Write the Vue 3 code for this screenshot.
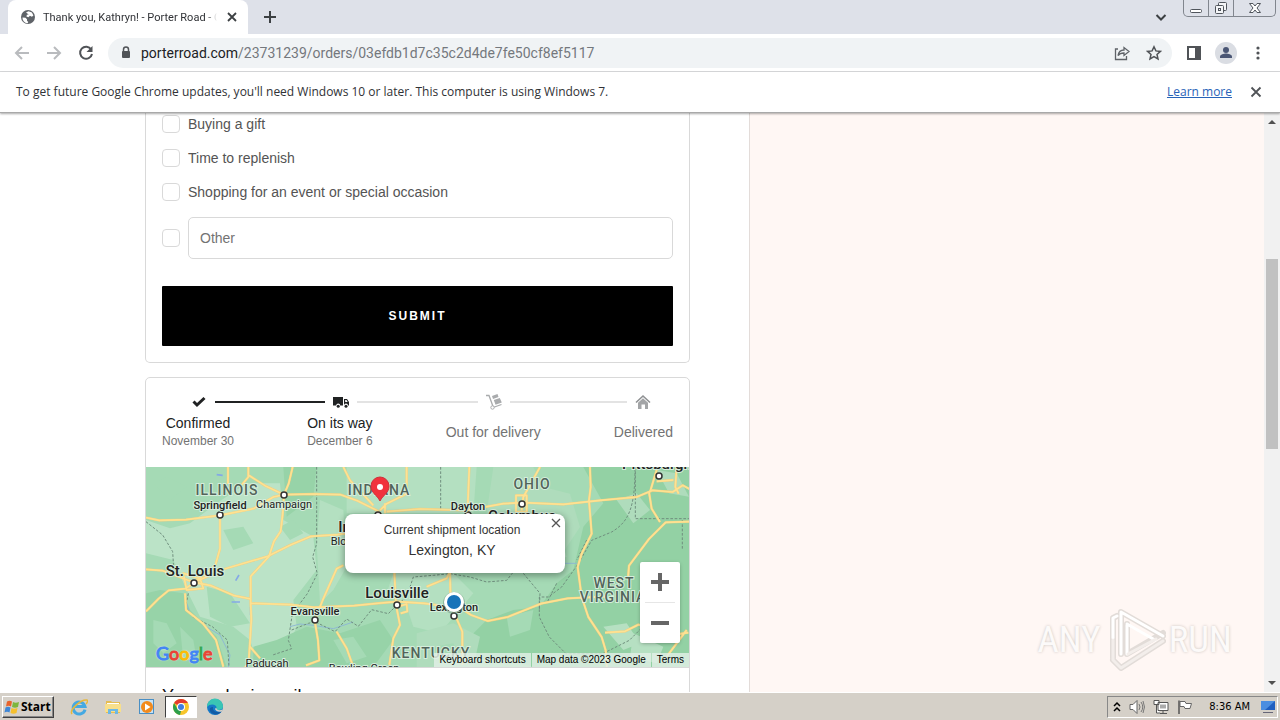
<template>
	<div class="desktop">
		<!-- tab strip -->
		<header class="tab-strip">
			<div class="tab">
				<svg class="globe" viewBox="0 0 16 16" width="16" height="16">
					<circle cx="8" cy="8" r="7" fill="#5f6368" />
					<path
						d="M2.5 8.5l3 .3 1.5 1.4v1.5l1.3 1.2-.8 1.3C4.6 14 2.4 11.500 2.500 8.500zM6 3.500l2.500-1.300 3.400 1.300 1.500 3-1.500 1.200-2-.9-1.500 1.400-2-.6.500-1.800 1.800-.3z"
						fill="#fff" />
				</svg>
				<span class="tab-title">Thank you, Kathryn! - Porter Road - Checkout</span>
				<button class="plain" aria-label="Close tab">
					<svg viewBox="0 0 16 16" width="16" height="16">
						<path d="M4 4l8 8M12 4l-8 8" stroke="#3c4043" stroke-width="1.800" />
					</svg>
				</button>
			</div>
			<button class="plain new-tab" aria-label="New tab">
				<svg viewBox="0 0 14 14" width="14" height="14">
					<path d="M7 1v12M1 7h12" stroke="#3c4043" stroke-width="2" />
				</svg>
			</button>
			<button class="plain tab-search" aria-label="Search tabs">
				<svg viewBox="0 0 12 12" width="12" height="12">
					<path d="M1.500 4L6 8.500 10.500 4" fill="none" stroke="#3c4043" stroke-width="2" />
				</svg>
			</button>
			<div class="window-buttons">
				<button aria-label="Minimize">
					<svg viewBox="0 0 14 14" width="14" height="14">
						<rect x="1.500" y="8.500" width="11" height="3" rx="1" fill="#fff" stroke="#50555c" />
					</svg>
				</button>
				<button aria-label="Restore">
					<svg viewBox="0 0 14 14" width="14" height="14">
						<g fill="#f4f5f7" stroke="#50555c">
							<rect x="4.500" y="1.500" width="8" height="8" rx="1" />
							<rect x="1.500" y="4.500" width="8" height="8" rx="1" />
							<rect x="4.500" y="7.500" width="2" height="2" />
						</g>
					</svg>
				</button>
				<button aria-label="Close">
					<svg viewBox="0 0 14 14" width="14" height="14">
						<path
							d="M1.500 2.500h3.500L7 5l2-2.500h3.500L9 7l3.500 4.500H9L7 9l-2 2.500H1.500L5 7z"
							fill="#fff"
							stroke="#50555c" />
					</svg>
				</button>
			</div>
		</header>

		<!-- toolbar -->
		<nav class="toolbar">
			<button class="plain" aria-label="Back">
				<svg viewBox="0 0 16 16" width="16" height="16">
					<path d="M15 8H2M8 2L2 8l6 6" fill="none" stroke="#b9bbbe" stroke-width="2" />
				</svg>
			</button>
			<button class="plain" aria-label="Forward">
				<svg viewBox="0 0 16 16" width="16" height="16">
					<path d="M1 8h13M8 2l6 6-6 6" fill="none" stroke="#b9bbbe" stroke-width="2" />
				</svg>
			</button>
			<button class="plain" aria-label="Reload">
				<svg viewBox="0 0 16 16" width="16" height="16">
					<path
						d="M13.200 4.500A6 6 0 1 0 14 9"
						fill="none"
						stroke="#505357"
						stroke-width="2" />
					<path d="M14.500 1v6h-6z" fill="#505357" />
				</svg>
			</button>
			<div class="address">
				<svg viewBox="0 0 12 16" width="12" height="16">
					<path d="M3.500 7V4.500a2.500 2.500 0 0 1 5 0V7" fill="none" stroke="#505357" stroke-width="1.500" />
					<rect x="2" y="6" width="8" height="7" rx="1" fill="#505357" />
				</svg>
				<span class="url"
					><b>porterroad.com</b>/23731239/orders/03efdb1d7c35c2d4de7fe50cf8ef5117</span
				>
				<button class="plain" aria-label="Share">
					<svg viewBox="0 0 16 16" width="16" height="16">
						<path
							d="M4 4H1.500v10.500h11V11M10 2.500V5C6.500 5 4.500 7.500 4 10.500 5.500 8.500 7.500 8 10 8v2.500l5-4z"
							fill="none"
							stroke="#5f6368"
							stroke-width="1.300" />
					</svg>
				</button>
				<button class="plain" aria-label="Bookmark">
					<svg viewBox="0 0 16 16" width="16" height="16">
						<path
							d="M8 1.800l1.900 4.100 4.500.5-3.400 3 1 4.500L8 11.600l-4 2.300 1-4.500-3.400-3 4.500-.5z"
							fill="none"
							stroke="#505357"
							stroke-width="1.500" />
					</svg>
				</button>
			</div>
			<button class="plain" aria-label="Side panel">
				<svg viewBox="0 0 16 16" width="16" height="16">
					<path d="M1 1h14v14H1zM3 3v10h6V3z" fill="#505357" fill-rule="evenodd" />
				</svg>
			</button>
			<button class="plain avatar" aria-label="Profile">
				<svg viewBox="0 0 22 22" width="22" height="22">
					<circle cx="11" cy="11" r="11" fill="#dadde3" />
					<circle cx="11" cy="8" r="3" fill="#4a5674" />
					<path d="M5 16v-1.500c0-2 4-3 6-3s6 1 6 3V16z" fill="#4a5674" />
				</svg>
			</button>
			<button class="plain" aria-label="Menu">
				<svg viewBox="0 0 16 16" width="16" height="16">
					<g fill="#505357">
						<circle cx="8" cy="3" r="1.600" />
						<circle cx="8" cy="8" r="1.600" />
						<circle cx="8" cy="13" r="1.600" />
					</g>
				</svg>
			</button>
		</nav>

		<div class="infobar">
			<span>{{ notice }}</span>
			<a href="#">Learn more</a>
			<button class="plain" aria-label="Dismiss">
				<svg viewBox="0 0 16 16" width="16" height="16">
					<path d="M3.500 3.500l9 9M12.500 3.500l-9 9" stroke="#505357" stroke-width="1.800" />
				</svg>
			</button>
		</div>

		<!-- page -->
		<div class="page">
			<main class="content">
				<form class="card survey" @submit.prevent>
					<label v-for="reason in reasons" :key="reason" class="option">
						<input type="checkbox" />
						<span>{{ reason }}</span>
					</label>
					<div class="option">
						<input type="checkbox" aria-label="Other" />
						<input v-model="other" class="field" type="text" placeholder="Other" aria-label="Other reason" />
					</div>
					<button class="submit">SUBMIT</button>
				</form>

				<section class="card">
					<div class="tracker">
						<div class="track-icons">
							<svg viewBox="0 0 16 16" width="16" height="16">
								<path d="M2.500 7.500L6 11l7.500-7" fill="none" stroke="#202223" stroke-width="3" />
							</svg>
							<i class="line first done"></i>
							<svg viewBox="0 0 16 16" width="16" height="16">
								<path
									d="M0 3h10v8.500H7.200a2 2 0 0 0-4 0H0zM11 5h3l2 3v3.500h-1a2 2 0 0 0-4 0zM12.200 6v2h2.500l-1.300-2z"
									fill="#202223"
									fill-rule="evenodd" />
								<circle cx="5.200" cy="12.200" r="1.500" fill="#202223" />
								<circle cx="13" cy="12.200" r="1.500" fill="#202223" />
							</svg>
							<i class="line second"></i>
							<svg viewBox="0 0 16 16" width="16" height="16">
								<path d="M0 1.500h3l4 11M7 13.500l8.500-3" fill="none" stroke="#a9abad" stroke-width="1.300" />
								<circle cx="6.500" cy="13.500" r="1.700" fill="#fff" stroke="#a9abad" />
								<path d="M6 2l5.500-2 1 3L7 5zM7.800 6l6-2 2 4.500-6.300 2.300z" fill="#a9abad" />
							</svg>
							<i class="line third"></i>
							<svg viewBox="0 0 16 16" width="16" height="16">
								<path d="M1 8.500L8 2l7 6.500" fill="none" stroke="#8f9193" stroke-width="1.600" />
								<path d="M3 8.800l5-4.600 5 4.600V15h-3v-4.500H6.500V15H3z" fill="#a3a5a7" />
							</svg>
						</div>
						<ol class="track-labels">
							<li v-for="step in steps" :key="step.name" :class="{ reached: step.date }">
								<span>{{ step.name }}</span>
								<small v-if="step.date">{{ step.date }}</small>
							</li>
						</ol>
					</div>

					<div class="map">
						<svg class="map-canvas" viewBox="0 0 543 200" preserveAspectRatio="xMidYMid slice">
							<rect width="543" height="200" fill="#a5dab5" />
							<g transform="translate(-6 -7) scale(.33333)">
								<!-- woodland and plains -->
								<path
									d="M18 180L90 205 150 190 230 130 320 70 420 70 430 180 520 230 530 330 460 420 470 500 440 570 350 600 330 540 280 500 180 470 140 390 100 300 18 280z"
									fill="#bbe3c7" />
								<path
									d="M540 120L610 150 620 320 580 390 540 430 530 250zM620 21L800 21 1010 21 1000 160 620 160zM760 340L940 340 1000 400 900 520 820 500 800 440 740 400z"
									fill="#b4e0c1" />
								<path
									d="M18 400L60 390 130 400 150 450 230 530 260 621 18 621zM340 560L410 540 500 500 600 520 720 480 760 540 700 621 340 621zM430 21L530 21 520 110 440 170z"
									fill="#97d3a8" />
								<path
									d="M1330 21L1647 21 1647 621 1180 621 1080 590 1010 600 990 530 1040 480 1120 450 1200 440 1250 370 1300 330 1330 200 1390 130z"
									fill="#93d1a4" />
								<path
									d="M1060 21l120 0 30 60 80 20 30 100-60 90-80-30-90 30-60-60zM830 520l110-30 80 40-20 91-170 0zM1430 120l60-20 40 50-50 40zM1550 30l60 10 37 70-60-10z"
									fill="#afdcbc" />
								<path
									d="M40 70l40-20 60 30-50 40zM70 300l50 20-20 40-50-15zM200 380l70 20 60 90-60 10-60-30zM250 210l60-10 30 50-60 20zM650 230l50-20 30 80-50 30zM580 470l50-20 40 40-60 20zM420 200l40-20 30 40-40 20z"
									fill="#a5dab5" />
								<path
									d="M40 480l40 10 30 60-40 30-30-30zM120 500l40 40 10 60-40 0zM580 540l60-10 40 60-60 20zM1100 470l80-20-10 60-60 20zM880 560l60-10 20 40-70 20z"
									fill="#a5dab5" />
								<path
									d="M1210 250l60 10 10 30-50 20zM1390 500l70-10 40 60-50 20zM1480 520l90 40-20 50-80-20zM1560 340l60 50-20 50-50-40z"
									fill="#b6e0c2" />

								<!-- water -->
								<path d="M287 362l10-17M275 426h25M230 44l18 2M332 440v25" stroke="#84a9e6" stroke-width="5" />
								<path
									d="M140 430l10 30 40 35 50 30 30 60-5 36M450 500l30-8 40 4 60 10 60-20M1250 270l20 40 40 0"
									fill="none"
									stroke="#8fb9d3"
									stroke-width="3" />

								<!-- state borders -->
								<g class="borders">
									<path
										d="M18 185l50 40 30 50 3 50M145 400l-8 40 20 30 60 30 45 40 5 80M530 21v230l-12 40 14 50-30 60-45 60-12 80 10 25-60 20" />
									<path
										d="M455 510l50-20 20-5 60 30 35-38 35 22 40-50 50 12 30-30 25-20 20-60 60-5 50-5 60 10 50 15 60-5 40-50 50 0" />
									<path
										d="M902 21v130M1486 21v155h161M1485 26c0 120-20 160-70 190l-60 25-40 70-50 70-40 30-27 0 0 60 30 60 50 50 110 0 80-40 60-60 90-40" />
									<path d="M1150 340l50 60-2 50M1627 180v90M1250 370l-30 60M1340 240l-30 60" />
								</g>

								<!-- highways -->
								<g class="roads casing">
									<path v-for="(d, i) in roads" :key="i" :d="d" />
								</g>
								<g class="roads">
									<path v-for="(d, i) in roads" :key="i" :d="d" />
								</g>
							</g>

							<g class="towns">
								<circle v-for="t in towns" :key="t.join()" :cx="t[0]" :cy="t[1]" r="3" />
							</g>
							<g class="place" text-anchor="middle">
								<text
									v-for="p in places"
									:key="p.text"
									:class="p.kind"
									:x="p.x"
									:y="p.y">{{ p.text }}</text>
							</g>

							<path
								d="M234 34c-3-6-9-8-9-15a9 9 0 0 1 18 0c0 7-6 9-9 15z"
								fill="#f1323c"
								stroke="#cf2f3a" />
							<circle cx="234" cy="20" r="3" fill="#fff" />
							<circle cx="308" cy="136" r="11" fill="#5b7f68" opacity=".4" />
							<circle cx="308" cy="135" r="10" fill="#fff" />
							<circle cx="308" cy="135" r="7" fill="#1773b9" />
						</svg>

						<div class="info-window">
							<span>Current shipment location</span>
							<strong>Lexington, KY</strong>
							<button class="plain" aria-label="Close">
								<svg viewBox="0 0 10 10" width="10" height="10">
									<path d="M1 1l8 8M9 1l-8 8" stroke="#555" stroke-width="1.300" />
								</svg>
							</button>
						</div>
						<div class="zoom-control">
							<button aria-label="Zoom in">
								<svg viewBox="0 0 18 18" width="18" height="18">
									<path d="M9 0v18M0 9h18" stroke="#666" stroke-width="4" />
								</svg>
							</button>
							<button aria-label="Zoom out">
								<svg viewBox="0 0 18 18" width="18" height="18">
									<path d="M0 9h18" stroke="#666" stroke-width="4" />
								</svg>
							</button>
						</div>
						<div class="google" aria-label="Google">
							<span class="blue">G</span><span class="red">o</span><span class="yellow">o</span
							><span class="blue">g</span><span class="green">l</span><span class="red">e</span>
						</div>
						<div class="attribution">
							<button>Keyboard shortcuts</button>
							<span>Map data ©2023 Google</span>
							<a href="#">Terms</a>
						</div>
					</div>
					<h2>Your order is mail</h2>
				</section>
			</main>
			<aside class="summary">
				<div class="watermark">
					<span>ANY</span>
					<svg viewBox="0 0 62 64" width="62" height="64">
						<g fill="none" stroke-linejoin="round" stroke-linecap="round">
							<g stroke="#e2dcd8" stroke-width="6">
								<path d="M17 46V4L59 28M9 50V10l4-2M23 16v30l36-21M9 52l8 8 42-27" />
							</g>
							<g stroke="#fff" stroke-width="3">
								<path d="M17 46V4L59 28M9 30V10l4-2M23 16v30M23 16l28 16" />
							</g>
							<path d="M9 32v20l8 8 42-27M24 46l28-15" stroke="#f3eeeb" stroke-width="3" />
						</g>
					</svg>
					<span>RUN</span>
				</div>
			</aside>
			<div class="scrollbar">
				<svg viewBox="0 0 8 4" width="8" height="4"><path d="M0 4l4-4 4 4z" fill="#505050" /></svg>
				<div class="thumb"></div>
				<svg viewBox="0 0 8 4" width="8" height="4"><path d="M0 0l4 4 4-4z" fill="#505050" /></svg>
			</div>
		</div>

		<!-- taskbar -->
		<footer class="taskbar">
			<button class="start">
				<svg viewBox="0 0 16 16" width="16" height="16">
					<path d="M3 2.500q2.500-1.500 5 0L7 7.500q-2.500-1.500-5 0z" fill="#e8632b" />
					<path d="M9 3q2.500 1.500 6 0l-1 5q-3 1.500-6 0z" fill="#7db63c" />
					<path d="M1.500 8.500q2.500-1.500 5 0l-1 5q-2.500-1.500-5 0z" fill="#3f87d6" />
					<path d="M7.500 9q2.500 1.500 6 0l-1 5q-3 1.500-6 0z" fill="#f6c02c" />
				</svg>
				Start
			</button>
			<button class="app" aria-label="Internet Explorer">
				<svg viewBox="0 0 18 18" width="18" height="18">
					<path
						d="M15 11.500A6 6 0 1 1 15 8.500H5"
						fill="none"
						stroke="#45a9e2"
						stroke-width="3" />
					<path d="M2 16C-1 12 11 1 17 2c1 1 0 3-1 4" fill="none" stroke="#e8b83a" stroke-width="1.500" />
				</svg>
			</button>
			<button class="app" aria-label="Explorer">
				<svg viewBox="0 0 18 18" width="18" height="18">
					<path d="M2 3h5l1 1h8v11H2z" fill="#e6bd52" />
					<path d="M3 5h12v5H3z" fill="#fff" />
					<path d="M1 6h16v8H1z" fill="#f8df8b" />
					<path d="M4 16v-5h10v5h-3v-3H7v3z" fill="#6db8e4" />
				</svg>
			</button>
			<button class="app" aria-label="Media Player">
				<svg viewBox="0 0 18 18" width="18" height="18">
					<rect x="1.500" y="1.500" width="14" height="14" fill="#c8e2f4" stroke="#4a8fc4" />
					<circle cx="9" cy="9" r="6" fill="#f28a1c" />
					<path d="M7 5.500v7L12.500 9z" fill="#fff" />
				</svg>
			</button>
			<button class="app active" aria-label="Chrome">
				<svg viewBox="0 0 18 18" width="18" height="18">
					<circle cx="9" cy="9" r="8" fill="#f7c52b" />
					<path d="M9 9L2.100 5A8 8 0 0 1 15.900 5H9z" fill="#e33b2e" />
					<path d="M2.100 5L5.500 11 9 13l-1 4A8 8 0 0 1 2.100 5z" fill="#2c9f4b" />
					<circle cx="9" cy="9" r="4" fill="#fff" />
					<circle cx="9" cy="9" r="3" fill="#3f7de0" />
				</svg>
			</button>
			<button class="app" aria-label="Edge">
				<svg viewBox="0 0 18 18" width="18" height="18">
					<circle cx="9" cy="9" r="8" fill="#1679c8" />
					<path d="M1 9a8 8 0 0 1 16-1c0 3-2 4-5 4-2 0-2-1-1.500-2C11 6 4 5 1 9z" fill="#3ac5b4" />
					<path d="M7 9c-1 5 5 6 9 4-3 5-10 4-12 0-1-3 1-4 3-4z" fill="#125ba5" />
					<path d="M10.500 10c-.5 2 3 3 6 1.500l-.5 2c-4 1-7-1-7-3z" fill="#d5d0c8" />
				</svg>
			</button>
			<div class="tray">
				<svg viewBox="0 0 8 12" width="8" height="12">
					<path d="M1 5l3-3 3 3M1 10l3-3 3 3" fill="none" stroke="#000" stroke-width="1.500" />
				</svg>
				<svg viewBox="0 0 16 16" width="16" height="16">
					<path d="M1 5.500h3l4-4v13l-4-4H1z" fill="#fff" stroke="#666" />
					<path d="M10 5q2 3 0 6M12 3q3.500 5 0 10M14 2q3 6 0 12" fill="none" stroke="#777" />
				</svg>
				<svg viewBox="0 0 16 16" width="16" height="16">
					<path d="M5 3.500h10v8H5zM7 14.500h7M10 12v2M1 1.500h5v4H1zM3.500 6v8H7" fill="#fff" stroke="#555" />
					<path d="M7 5.500h6v4H7z" fill="#aaa" />
				</svg>
				<svg viewBox="0 0 16 16" width="16" height="16">
					<path d="M2 1.500V15" stroke="#555" stroke-width="1.500" />
					<path d="M3 2.500h5l1 2h5.500L13 9.500H8l-1-2H3z" fill="#fff" stroke="#666" />
				</svg>
				<time>8:36 AM</time>
				<svg viewBox="0 0 16 16" width="16" height="16">
					<path d="M1 2h14v9H1z" fill="#1f5fc0" />
					<path d="M1 2h14L5 11H1z" fill="#4b8ee0" />
					<path d="M3 13h10v1H3z" fill="#667" />
				</svg>
			</div>
		</footer>
	</div>
</template>

<script setup>
	import { ref } from "vue";

	const notice =
		"To get future Google Chrome updates, you'll need Windows 10 or later. This computer is using Windows 7.";

	const reasons = [
		"Buying a gift",
		"Time to replenish",
		"Shopping for an event or special occasion"
	];
	const other = ref("");

	const steps = [
		{ name: "Confirmed", date: "November 30" },
		{ name: "On its way", date: "December 6" },
		{ name: "Out for delivery" },
		{ name: "Delivered" }
	];

	// highways, drawn at three times the map scale
	const roads = [
		"M18 173l40 8 80-2 102-13 100-20 60-35 32-7 90-2 80 2 50 18 60 30 10 10",
		"M264 21v50M325 21v30l-25 30M325 45l50 32 57 27M458 21l-12 50-14 33-4 60-6 50-20 30-15 45-55 60v80l2 50-8 130-20 25-3 50M330 560l30 35",
		"M240 166v100l-14 50-60 50-30 20-50 5-30 25-38 38M18 328l50 4 80 30 15 5",
		"M163 367l90-40 130-38 70-35 60-25 80-5 40-6M163 367l50 10 70 30 50 10M333 430l120 4 70 8 120-5 80-8 50-4 80 5 110 15 30 20 50 18 60-12 100-40 80-16 120-6",
		"M135 400l3 50 50 40 40 50 22 80M610 21l20 40 70 75M800 21v80l-60 30-20 20M735 130v30M740 155l100-8 140 4 110-20 60-3 120 5 110-12 110-10 48-20 60 5 30-20 22 12",
		"M610 316l-20 10-40 90-26 65 10 60 4 60-40 15M590 515l30 50 20 56M763 335l5 100 12 60-20 40-12 80M775 440l25-8 2 22-20 6M860 380l60-25 10-20 2 100 35 80v100",
		"M988 21l-6 150M1200 21l-50 90-5 40M1350 21l2 60-5 40 8 100-30 60-12 40 12 90 20 60 40 60 12 40 5 70M1395 518l60-4 40-20 60 15 50 15 40-6M1580 590l60-80",
		"M1647 185l-70 2-50 50-60 80-3 40M1527 96l8 50 25 40M1550 30l-20 66M1610 21l-4 60 10 20M1550 64l50-4",
		"M1128 106h32v50h-32zM130 340l10 50 50-5-10-30z"
	];

	const towns = [
		[138, 28], [74, 48], [48, 116], [251, 138], [169, 153],
		[376, 37], [513, 9], [308, 149], [232, 48], [322, 48]
	];

	const places = [
		{ text: "ILLINOIS", x: 81, y: 28, kind: "state" },
		{ text: "INDIANA", x: 233, y: 28, kind: "state" },
		{ text: "OHIO", x: 386, y: 22, kind: "state" },
		{ text: "WEST", x: 468, y: 121, kind: "state" },
		{ text: "VIRGINIA", x: 467, y: 135, kind: "state" },
		{ text: "KENTUCKY", x: 285, y: 191, kind: "state" },
		{ text: "Springfield", x: 74, y: 42, kind: "town" },
		{ text: "Champaign", x: 138, y: 41, kind: "small" },
		{ text: "Bloomington", x: 216, y: 78, kind: "small" },
		{ text: "Indianapolis", x: 233, y: 65, kind: "city" },
		{ text: "St. Louis", x: 49, y: 109, kind: "city" },
		{ text: "Louisville", x: 251, y: 131, kind: "city" },
		{ text: "Evansville", x: 169, y: 148, kind: "town" },
		{ text: "Lexington", x: 308, y: 144, kind: "town" },
		{ text: "Dayton", x: 322, y: 43, kind: "town" },
		{ text: "Columbus", x: 376, y: 54, kind: "city" },
		{ text: "Pittsburgh", x: 511, y: 2, kind: "city" },
		{ text: "Paducah", x: 121, y: 200, kind: "small" },
		{ text: "Bowling Green", x: 218, y: 205, kind: "small" }
	];
</script>

<style>
	body {
		margin: 0;
	}
</style>

<style scoped>
	.desktop {
		display: flex;
		flex-direction: column;
		height: 100vh;
		overflow: hidden;
		background: #fff;
		color: #303236;
		font-family: "Open Sans", "Noto Sans", sans-serif;
		font-size: 12px;
	}

	.desktop * {
		box-sizing: border-box;
	}

	svg {
		display: block;
		flex: none;
	}

	button {
		font: inherit;
		color: inherit;
	}

	.plain {
		padding: 0;
		border: 0;
		background: none;
	}

	/* tabs */
	.tab-strip {
		display: flex;
		flex: none;
		height: 34px;
		padding-left: 8px;
		background: #dee1e9;
	}

	.tab {
		display: flex;
		align-items: center;
		gap: 7px;
		width: 240px;
		padding: 0 8px 0 12px;
		border-radius: 8px 8px 0 0;
		background: #fff;
	}

	.tab-title {
		flex: 1;
		overflow: hidden;
		white-space: nowrap;
		font-family: Roboto, sans-serif;
		font-size: 11px;
		mask-image: linear-gradient(90deg, #000 94%, transparent);
	}

	.new-tab {
		margin-left: 15px;
	}

	.tab-search {
		margin-left: auto;
	}

	.window-buttons {
		display: flex;
		height: 17px;
		margin: 0 4px 0 16px;
		border: 1px solid #81868e;
		border-top: 0;
		border-radius: 0 0 5px 5px;
	}

	.window-buttons button {
		display: flex;
		align-items: center;
		justify-content: center;
		width: 25px;
		padding: 0;
		border: 0;
		border-right: 1px solid #81868e;
		background: none;
	}

	.window-buttons button:last-child {
		width: 41px;
		border-right: 0;
	}

	/* toolbar */
	.toolbar {
		display: flex;
		flex: none;
		align-items: center;
		gap: 16px;
		height: 38px;
		padding: 0 14px;
		border-bottom: 1px solid #d9dadc;
	}

	.address {
		display: flex;
		flex: 1;
		align-items: center;
		gap: 16px;
		height: 30px;
		margin: 0 -2px;
		padding: 0 10px 0 12px;
		border-radius: 15px;
		background: #f0f3f5;
	}

	.url {
		flex: 1;
		margin-left: -7px;
		font-family: Roboto, sans-serif;
		font-size: 14px;
		color: #74787d;
	}

	.url b {
		font-weight: 400;
		color: #202124;
	}

	.avatar {
		margin: 0 -3px;
	}

	.infobar {
		display: flex;
		position: relative;
		z-index: 1;
		flex: none;
		align-items: center;
		gap: 16px;
		height: 41px;
		padding: 0 16px 1px;
		border-bottom: 1px solid #a9a9a9;
		background: #fff;
		box-shadow: 0 1px 2px #0005;
	}

	.infobar a {
		margin-left: auto;
		color: #2763b8;
	}

	/* page */
	.page {
		display: grid;
		flex: 1;
		grid-template-columns: 750fr 514fr 16px;
		min-height: 0;
		overflow: hidden;
		font-family: "Liberation Sans", Arial, sans-serif;
		font-size: 14px;
	}

	.content {
		min-width: 0;
		min-height: 0;
		overflow: hidden;
		padding: 0 59px 0 145px;
		border-right: 1px solid #e3dcd9;
	}

	.card {
		border: 1px solid #d9d9d9;
		border-radius: 5px;
	}

	.survey {
		display: flex;
		flex-direction: column;
		gap: 16px;
		margin-bottom: 14px;
		padding: 2px 16px 16px;
		border-top: 0;
		border-radius: 0 0 5px 5px;
	}

	.option {
		display: flex;
		align-items: center;
		gap: 8px;
		line-height: 18px;
		color: #545454;
	}

	.option input[type="checkbox"] {
		flex: none;
		appearance: none;
		width: 18px;
		height: 18px;
		margin: 0;
		border: 1px solid #d9d9d9;
		border-radius: 4px;
		background: #fff;
	}

	.field {
		flex: 1;
		min-width: 0;
		height: 42px;
		padding: 0 11px;
		border: 1px solid #d9d9d9;
		border-radius: 5px;
		font: inherit;
	}

	.field::placeholder {
		color: #737373;
	}

	.submit {
		height: 60px;
		margin-top: 11px;
		border: 0;
		border-radius: 1px;
		background: #000;
		color: #fff;
		font-size: 12px;
		font-weight: 700;
		letter-spacing: 2px;
	}

	/* delivery steps */
	.tracker {
		padding: 16px 16px 17px;
	}

	.track-icons {
		display: flex;
		align-items: center;
		gap: 8px;
		padding: 0 22px 0 29px;
	}

	.line {
		height: 2px;
		background: #e3e3e3;
	}

	.line.first {
		flex: 110;
	}

	.line.second {
		flex: 121;
	}

	.line.third {
		flex: 117;
	}

	.line.done {
		background: #202223;
	}

	.track-labels {
		display: flex;
		align-items: center;
		justify-content: space-between;
		margin: 4px 0 0;
		padding: 0;
		list-style: none;
		text-align: center;
		line-height: 18px;
		color: #737373;
	}

	.track-labels li {
		display: flex;
		flex-direction: column;
	}

	.track-labels .reached span {
		color: #202223;
	}

	.track-labels small {
		font-size: 12px;
	}

	/* map */
	.map {
		position: relative;
		height: 201px;
		border-bottom: 1px solid #d9d9d9;
		overflow: hidden;
	}

	.map-canvas {
		width: 100%;
		height: 100%;
	}

	.borders path {
		fill: none;
		stroke: #6f8f7d;
		stroke-width: 3;
		stroke-dasharray: 8 5;
	}

	.roads path {
		fill: none;
		stroke: #fde293;
		stroke-width: 5;
		stroke-linejoin: round;
	}

	.roads.casing path {
		stroke: #f5cd7b;
		stroke-width: 7;
	}

	.towns circle {
		fill: #fff;
		stroke: #333;
		stroke-width: 1.5px;
	}

	.place text {
		font-family: Roboto, sans-serif;
		font-size: 11px;
		font-weight: 500;
		fill: #222;
		stroke: #d5eedc;
		stroke-width: 2px;
		paint-order: stroke;
	}

	.place .small {
		font-weight: 400;
	}

	.place .city {
		font-size: 15px;
	}

	.place .state {
		font-size: 14px;
		letter-spacing: 1px;
		fill: #52645a;
	}

	.info-window {
		display: flex;
		position: absolute;
		top: 47px;
		left: 199px;
		flex-direction: column;
		width: 220px;
		height: 59px;
		padding: 6px 14px 6px 8px;
		border-radius: 8px;
		background: #fff;
		box-shadow: 0 2px 7px 1px #0005;
		text-align: center;
		line-height: 20px;
		font-size: 12px;
		color: #333;
	}

	.info-window strong {
		font-size: 14px;
		font-weight: 400;
	}

	.info-window button {
		position: absolute;
		top: 4px;
		right: 4px;
	}

	.zoom-control {
		position: absolute;
		top: 95px;
		right: 9px;
		width: 40px;
		padding: 0 5px;
		border-radius: 2px;
		background: #fff;
		box-shadow: 0 1px 4px -1px #0006;
	}

	.zoom-control button {
		display: flex;
		align-items: center;
		justify-content: center;
		width: 30px;
		height: 40px;
		padding: 0;
		border: 0;
		background: none;
	}

	.zoom-control button + button {
		height: 41px;
		border-top: 1px solid #e6e6e6;
	}

	.google {
		position: absolute;
		bottom: 2px;
		left: 10px;
		font-family: Lato, sans-serif;
		font-size: 18px;
		line-height: 24px;
		-webkit-text-stroke: 1px;
		text-shadow: 0 0 2px #fff;
	}

	.blue {
		color: #4285f4;
	}

	.red {
		color: #e94335;
	}

	.yellow {
		color: #fbbc05;
	}

	.green {
		color: #34a853;
	}

	.attribution {
		display: flex;
		position: absolute;
		right: 0;
		bottom: 0;
		gap: 1px;
		line-height: 14px;
		font-size: 10px;
		color: #000;
	}

	.attribution > * {
		padding: 0 5px;
		border: 0;
		background: #e3f0e7cc;
		color: #000;
		text-decoration: none;
	}

	h2 {
		margin: 16px;
		font-size: 18px;
		font-weight: 400;
		line-height: 24px;
		color: #111;
	}

	.summary {
		display: flex;
		align-items: flex-end;
		justify-content: flex-end;
		min-width: 0;
		background: #fff7f4;
	}

	.watermark {
		display: flex;
		align-items: center;
		gap: 3px;
		margin: 0 32px 20px 0;
		font-family: "Roboto Condensed", "Liberation Sans Narrow", "Liberation Sans", sans-serif;
		font-size: 37px;
		line-height: 64px;
		color: #fcfaf9;
		text-shadow: 0 0 3px #c8c2be;
	}

	.scrollbar {
		display: flex;
		flex-direction: column;
		align-items: center;
		justify-content: space-between;
		padding: 7px 0;
		background: #f1f1f1;
	}

	.thumb {
		width: 12px;
		height: 190px;
		margin-bottom: 98px;
		background: #c1c1c1;
	}

	/* taskbar */
	.taskbar {
		display: flex;
		flex: none;
		align-items: center;
		height: 28px;
		padding: 0 2px;
		border-top: 1px solid #fff;
		background: #d5d0c8;
		font-family: "DejaVu Sans Condensed", "Open Sans", sans-serif;
		font-size: 11px;
		color: #000;
	}

	.start {
		display: flex;
		align-items: center;
		gap: 1px;
		width: 52px;
		height: 22px;
		margin-right: 9px;
		padding: 0 1px;
		border: 1px solid;
		border-color: #fff #404040 #404040 #fff;
		background: #d5d0c8;
		box-shadow: inset -1px -1px #888;
		font-family: "Open Sans", sans-serif;
		font-size: 12px;
		font-weight: 700;
	}

	.app {
		display: flex;
		align-items: center;
		justify-content: center;
		width: 32px;
		height: 22px;
		margin-right: 2px;
		padding: 0;
		border: 1px solid transparent;
		background: none;
	}

	.app.active {
		border-color: #404040 #fff #fff #404040;
		background: #fff;
	}

	.tray {
		display: flex;
		align-items: center;
		gap: 8px;
		height: 22px;
		margin-left: auto;
		padding: 0 1px 0 5px;
		border: 1px solid;
		border-color: #888 #fff #fff #888;
	}

	.tray time {
		margin: 0 2px 0 8px;
	}
</style>
